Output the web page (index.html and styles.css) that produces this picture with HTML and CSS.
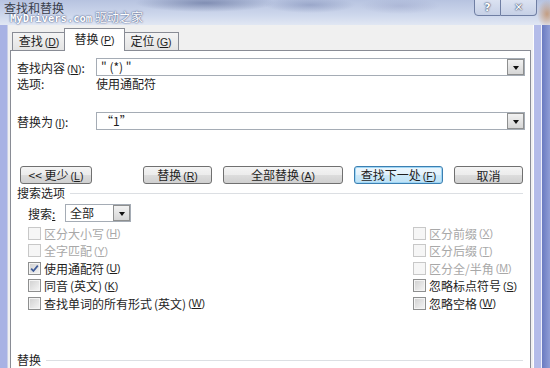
FILE: index.html
```html
<!DOCTYPE html>
<html lang="zh-CN">
<head>
  <meta charset="UTF-8">
  <title>查找和替换</title>
  <link rel="stylesheet" href="styles.css">
</head>
<body>
<div class="window">
  <div class="titlebar">
    <span class="title">查找和替换</span>
    <span class="watermark"><span class="wm-en">MyDrivers.com</span> 驱动之家</span>
    <div class="caption-btns">
      <span class="cap help">?</span>
      <span class="cap close">✕</span>
    </div>
  </div>

  <div class="frame">
    <div class="dialog">
      <div class="tabs">
        <div class="tab t1">查找<span class="key">(<u>D</u>)</span></div>
        <div class="tab active">替换<span class="key">(<u>P</u>)</span></div>
        <div class="tab t3">定位<span class="key">(<u>G</u>)</span></div>
      </div>

      <div class="panel">
        <div class="field">
          <label>查找内容<span class="key">(<u>N</u>)</span>:</label>
          <div class="combo"><span class="combo-text">" (*) "</span><span class="drop"><i></i></span></div>
        </div>
        <div class="field opts">
          <span>选项:</span>
          <span>使用通配符</span>
        </div>
        <div class="field replace-row">
          <label>替换为<span class="key">(<u>I</u>)</span>:</label>
          <div class="combo"><span class="combo-text">“1”</span><span class="drop"><i></i></span></div>
        </div>

        <div class="buttons">
          <button class="btn less">&lt;&lt; 更少<span class="key">(<u>L</u>)</span></button>
          <button class="btn w69">替换<span class="key">(<u>R</u>)</span></button>
          <button class="btn w120">全部替换<span class="key">(<u>A</u>)</span></button>
          <button class="btn w89 default">查找下一处<span class="key">(<u>F</u>)</span></button>
          <button class="btn w69">取消</button>
        </div>

        <div class="group-head">搜索选项</div>

        <div class="search-row">
          <span class="search-label">搜索<u>:</u></span>
          <div class="select"><span class="combo-text">全部</span><span class="drop"><i></i></span></div>
        </div>

        <div class="checks">
          <div class="chk off"><span class="box"></span>区分大小写<span class="key">(<u>H</u>)</span></div>
          <div class="chk off"><span class="box"></span>全字匹配<span class="key">(<u>Y</u>)</span></div>
          <div class="chk"><span class="box"><svg width="9" height="9" viewBox="0 0 9 9"><path d="M1.2 4.6 L3.4 7 L7.8 1.6" stroke="#3d5a98" stroke-width="1.7" fill="none"/></svg></span>使用通配符<span class="key">(<u>U</u>)</span></div>
          <div class="chk"><span class="box"></span>同音<span class="paren">(英文)</span><span class="key">(<u>K</u>)</span></div>
          <div class="chk"><span class="box"></span>查找单词的所有形式<span class="paren">(英文)</span><span class="key">(<u>W</u>)</span></div>
          <div class="chk off"><span class="box"></span>区分前缀<span class="key">(<u>X</u>)</span></div>
          <div class="chk off"><span class="box"></span>区分后缀<span class="key">(<u>T</u>)</span></div>
          <div class="chk off"><span class="box"></span>区分全/半角<span class="key">(<u>M</u>)</span></div>
          <div class="chk"><span class="box"></span>忽略标点符号<span class="key">(<u>S</u>)</span></div>
          <div class="chk"><span class="box"></span>忽略空格<span class="key">(<u>W</u>)</span></div>
        </div>

        <div class="group-head bottom">替换</div>
      </div>
    </div>
    <div class="rframe"></div>
    <div class="outside"></div>
  </div>
</div>
</body>
</html>
```

FILE: styles.css
```css
body {
  margin: 0;
  width: 550px;
  height: 368px;
  overflow: hidden;
  font-family: "Noto Sans CJK SC", "DejaVu Sans", sans-serif;
  font-size: 12px;
  color: #1e1e1e;
  background: #7d8cca;
}
.window {
  width: 550px;
  height: 368px;
  display: flex;
  flex-direction: column;
}

/* title bar */
.titlebar {
  position: relative;
  height: 25px;
  flex: none;
  background:
    radial-gradient(ellipse 70px 9px at 205px 3px, rgba(80, 95, 140, .55), transparent),
    radial-gradient(ellipse 45px 8px at 310px 5px, rgba(110, 125, 170, .45), transparent),
    radial-gradient(ellipse 40px 8px at 400px 6px, rgba(140, 150, 190, .35), transparent),
    radial-gradient(ellipse 10px 14px at 547px 14px, rgba(190, 120, 60, .6), transparent),
    linear-gradient(180deg, #b7c3e0 0%, #cdd7ec 60%, #e1e7f3 100%);
}
.title {
  position: absolute;
  left: 4px;
  top: 0;
  line-height: 15px;
  color: #3a3f4c;
}
.watermark {
  position: absolute;
  left: 10px;
  top: 9px;
  line-height: 15px;
  font-size: 12px;
  color: #fff;
  text-shadow: 0 0 2px #4e5c88, 0 0 1px #4e5c88;
}
.wm-en {
  font-family: "DejaVu Sans Mono", monospace;
  font-size: 10.5px;
  font-weight: bold;
}
.caption-btns {
  position: absolute;
  right: 13px;
  top: -1px;
  display: flex;
}
.cap {
  height: 15px;
  line-height: 15px;
  text-align: center;
  font-family: "DejaVu Sans", sans-serif;
  font-weight: bold;
  font-size: 11px;
  color: #fff;
  text-shadow: 0 0 2px #2e3a5c, 0 0 1px #2e3a5c;
  border: 1px solid #6f7ea3;
  background: linear-gradient(180deg, #dbe2f1, #c6d0e6);
}
.help {
  width: 25px;
  border-radius: 0 0 0 4px;
}
.close {
  width: 35px;
  border-left: none;
  border-radius: 0 0 4px 0;
}

/* frame */
.frame {
  flex: 1;
  display: flex;
  background: #a8b2e4;
  padding-left: 8px;
}
.dialog {
  width: 525px;
  background: #f0f0f0;
  padding-top: 3px;
  border-left: 1px solid #c9cfe8;
  margin-left: -1px;
}
.rframe {
  width: 7px;
  background: #b4bce9;
  border-left: 1px solid #fdfdfd;
  border-right: 1px solid #eef0fa;
}
.outside {
  flex: 1;
  background: linear-gradient(90deg, #6a7bc1, #8f9dd6);
}

/* tabs */
.key {
  font-family: "Liberation Sans", sans-serif;
  font-size: 10.5px;
  margin-left: 2px;
}
.paren {
  margin-left: 2px;
}
.tabs {
  display: flex;
  align-items: flex-end;
  height: 22px;
  margin-left: 4px;
  position: relative;
  z-index: 1;
}
.tab {
  box-sizing: border-box;
  height: 18px;
  line-height: 16px;
  text-align: center;
  border: 1px solid #898c95;
  border-bottom: none;
  background: linear-gradient(180deg, #f4f4f4, #e4e4e4);
}
.t1 { width: 54px; }
.t3 { width: 56px; }
.tab.active {
  width: 61px;
  height: 23px;
  margin: 0 -2px -1px;
  background: #fff;
  position: relative;
  z-index: 2;
  line-height: 20px;
}

/* panel */
.panel {
  margin: 0 2px;
  height: 320px;
  border: 1px solid #898c95;
  background: #fff;
  padding: 7px 5px 0 6px;
}
.field {
  display: grid;
  grid-template-columns: 79px 1fr;
  align-items: center;
  height: 18px;
}
.opts {
  height: 16px;
  line-height: 16px;
}
.replace-row {
  margin-top: 20px;
}
.combo, .select {
  box-sizing: border-box;
  height: 18px;
  border: 1px solid #a5acb5;
  background: #fff;
  display: flex;
  align-items: center;
  justify-content: space-between;
}
.combo-text {
  padding-left: 4px;
  line-height: 16px;
}
.drop {
  box-sizing: border-box;
  width: 17px;
  height: 16px;
  border: 1px solid #8e8f8f;
  background: linear-gradient(180deg, #f2f2f2, #d6d6d6);
  display: flex;
  align-items: center;
  justify-content: center;
}
.drop i {
  width: 0;
  height: 0;
  border-left: 3.5px solid transparent;
  border-right: 3.5px solid transparent;
  border-top: 4px solid #111;
  margin-top: 1px;
}

/* buttons */
.buttons {
  display: flex;
  gap: 11px;
  margin-top: 36px;
  padding-left: 3px;
}
.btn {
  box-sizing: border-box;
  height: 18px;
  padding: 0;
  font: inherit;
  line-height: 15px;
  color: #1e1e1e;
  border: 1px solid #707070;
  border-radius: 3px;
  background: linear-gradient(180deg, #f4f4f4 0%, #ececec 48%, #dcdcdc 52%, #d0d0d0 100%);
}
.less { width: 72px; margin-right: 40px; }
.w69 { width: 69px; }
.w120 { width: 120px; }
.w89 { width: 89px; }
.btn.default {
  border-color: #3c7fb1;
  box-shadow: inset 0 0 0 1px #9fd6f5;
  background: linear-gradient(180deg, #eef7fd 0%, #e2f1fb 48%, #cce8f8 52%, #bfe2f6 100%);
}

/* search options */
.group-head {
  display: flex;
  align-items: center;
  margin-top: 1px;
  line-height: 16px;
}
.group-head::after {
  content: "";
  flex: 1;
  height: 1px;
  background: #dcdfe3;
  margin-left: 5px;
  margin-right: 2px;
}
.group-head.bottom {
  margin-top: 40px;
}
.search-row {
  display: flex;
  align-items: center;
  margin-top: 3px;
  padding-left: 11px;
  height: 18px;
}
.search-label {
  width: 37px;
}
.select {
  width: 66px;
}
.checks {
  display: grid;
  grid-auto-flow: column;
  grid-template-columns: 385px 1fr;
  grid-template-rows: repeat(5, 17.5px);
  margin-top: 2.5px;
  padding-left: 11px;
}
.chk {
  display: flex;
  align-items: center;
  white-space: nowrap;
}
.box {
  box-sizing: border-box;
  width: 13px;
  height: 13px;
  margin-right: 3px;
  border: 1px solid #8e8f8f;
  background: linear-gradient(135deg, #cfcfcf, #f6f6f6);
  box-shadow: inset 0 0 0 1px #f4f4f4;
  display: flex;
  align-items: center;
  justify-content: center;
}
.chk.off {
  color: #a8a8a8;
}
.chk.off .box {
  border-color: #c8c8c8;
  background: #f6f6f6;
  box-shadow: none;
}
```
